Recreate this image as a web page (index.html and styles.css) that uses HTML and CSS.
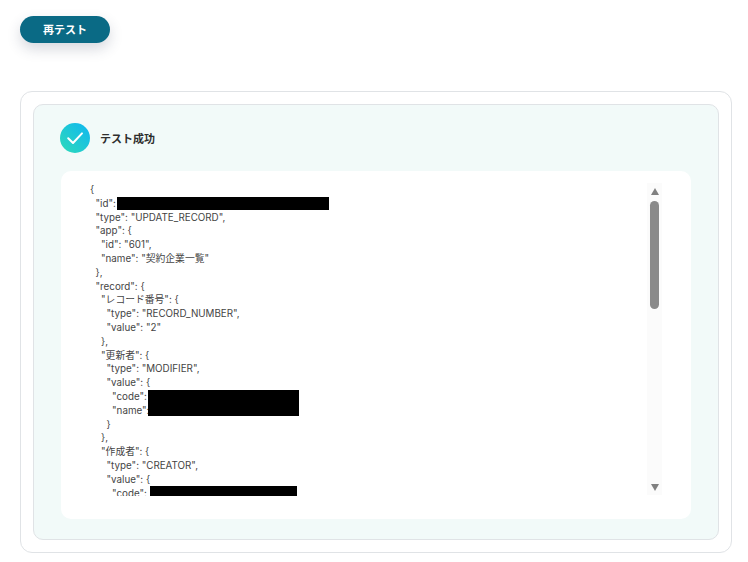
FILE: index.html
```html
<!DOCTYPE html>
<html lang="ja">
<head>
<meta charset="utf-8">
<title>テスト成功</title>
<link rel="stylesheet" href="styles.css">
</head>
<body>
<button class="retest">再テスト</button>
<section class="outer">
  <div class="inner">
    <header class="status">
      <svg class="check" width="30" height="30" viewBox="0 0 30 30" aria-hidden="true">
        <defs>
          <linearGradient id="g" x1="0" y1="1" x2="1" y2="0">
            <stop offset="0" stop-color="#2edbb8"/>
            <stop offset="1" stop-color="#0fb6f2"/>
          </linearGradient>
        </defs>
        <circle cx="15" cy="15" r="15" fill="url(#g)"/>
        <path d="M8.2 15.2l4.8 4.8 9-9.6" fill="none" stroke="#fff" stroke-width="2" stroke-linecap="round" stroke-linejoin="round"/>
      </svg>
      <span class="status-text">テスト成功</span>
    </header>
    <div class="panel">
      <div class="code-wrap">
<pre class="code">{
  "id": "0000000000000000000000",
  "type": "UPDATE_RECORD",
  "app": {
    "id": "601",
    "name": "契約企業一覧"
  },
  "record": {
    "レコード番号": {
      "type": "RECORD_NUMBER",
      "value": "2"
    },
    "更新者": {
      "type": "MODIFIER",
      "value": {
        "code": "000000000",
        "name": "000000000"
      }
    },
    "作成者": {
      "type": "CREATOR",
      "value": {
        "code": "000000000"</pre>
        <span class="redact r1"></span>
        <span class="redact r2"></span>
        <span class="redact r3"></span>
      </div>
      <div class="scrollbar" aria-hidden="true">
        <span class="arrow up"></span>
        <span class="thumb"></span>
        <span class="arrow down"></span>
      </div>
    </div>
  </div>
</section>
</body>
</html>
```
FILE: styles.css
```css
* { box-sizing: border-box; }
html, body { margin: 0; padding: 0; background: #fff; }
body {
  width: 748px;
  height: 562px;
  overflow: hidden;
  padding: 16px 16px 0 20px;
  font-family: "Noto Sans CJK JP", "Noto Sans", sans-serif;
}
.retest {
  display: block;
  width: 90px;
  height: 27px;
  border: 0;
  padding: 0;
  border-radius: 14px;
  background: #0a6a85;
  color: #fff;
  font: 700 11px/27px "Noto Sans CJK JP", sans-serif;
  box-shadow: 0 6px 14px rgba(50, 60, 90, 0.2);
}
.outer {
  width: 712px;
  height: 462px;
  margin-top: 48px;
  padding: 12px;
  border: 1px solid #e0e3e6;
  border-radius: 12px;
  background: #fff;
}
.inner {
  height: 436px;
  padding: 18px 27px 20px;
  border: 1px solid #e0e3e6;
  border-radius: 10px;
  background: #f2faf9;
}
.status {
  display: flex;
  align-items: center;
  gap: 10px;
  height: 30px;
  margin: 0 0 18px -1px;
}
.check { display: block; flex: none; }
.status-text {
  font-size: 11px;
  font-weight: 700;
  color: #2e2e2e;
}
.panel {
  display: flex;
  height: 348px;
  padding: 12px 29px 24px 0;
  border-radius: 10px;
  background: #fff;
}
.code-wrap {
  position: relative;
  flex: 1;
  overflow: hidden;
  height: 313px;
}
.code {
  margin: 0;
  padding: 0 0 0 29px;
  font: 400 9.8px/13.8px Inter, "Noto Sans CJK JP", sans-serif;
  color: #444;
  white-space: pre;
}
.redact { position: absolute; background: #000; }
.r1 { left: 56px; top: 14px; width: 212px; height: 13px; }
.r2 { left: 87px; top: 207px; width: 151px; height: 26px; }
.r3 { left: 89px; top: 303px; width: 147px; height: 11px; }
.scrollbar {
  flex: none;
  display: flex;
  flex-direction: column;
  align-items: center;
  width: 15px;
  height: 312px;
  padding-top: 5px;
  background: #fbfbfb;
}
.thumb {
  width: 9px;
  height: 108px;
  margin-top: 6px;
  border-radius: 5px;
  background: #8a8a8a;
}
.arrow {
  width: 0;
  height: 0;
  border-left: 4.5px solid transparent;
  border-right: 4.5px solid transparent;
}
.up { border-bottom: 7px solid #808080; }
.down { border-top: 7px solid #808080; margin-top: auto; margin-bottom: 4px; }
```
